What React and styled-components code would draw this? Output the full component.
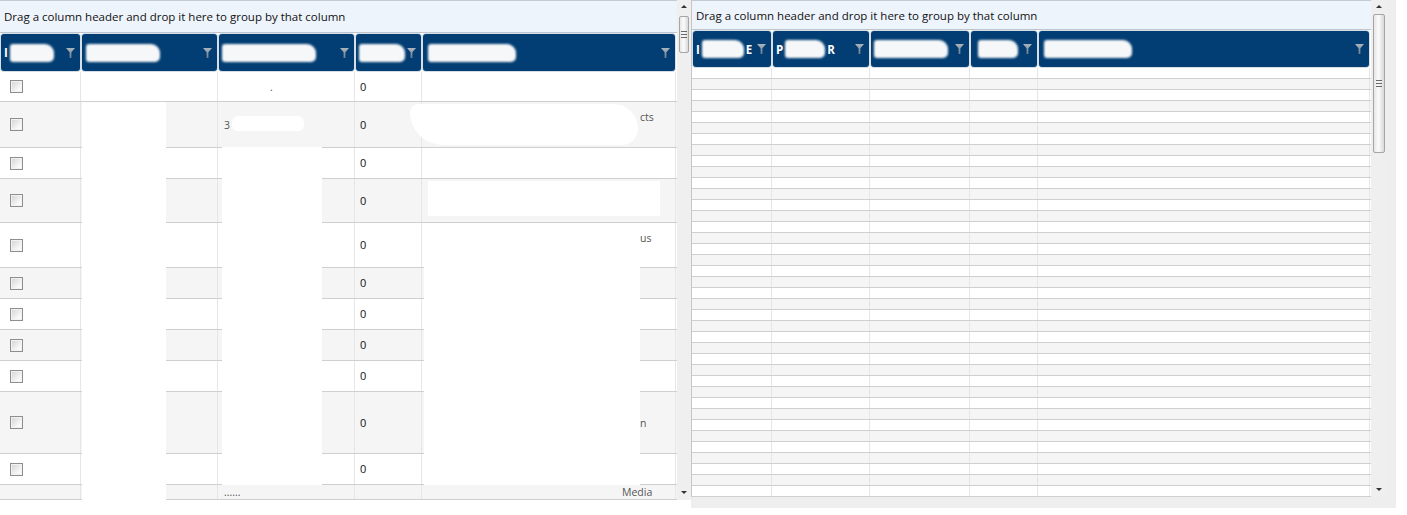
import React from 'react'
import styled, { createGlobalStyle } from 'styled-components'

const GlobalStyle = createGlobalStyle`
  html, body {
    margin: 0;
    padding: 0;
    background: #fff;
    font-family: "Open Sans", "Noto Sans", sans-serif;
    color: #111;
  }
`;

const Page = styled.div`
  display: flex;
  align-items: flex-start;
  width: 1407px;
  height: 515px;
  overflow: hidden;
`;

const LeftPane = styled.div`
  display: flex;
  height: 500px;
`;

const RightPane = styled.div`
  display: flex;
  height: 497px;
  padding: 0 9px 11px 0;
  background: #eeeeee;
`;

const Grid = styled.div`
  position: relative;
  display: flex;
  flex-direction: column;
  width: ${p => p.$w}px;
  height: 100%;
  overflow: hidden;
  background: #fff;
  border-left: ${p => (p.$edge ? '1px solid #c6c6c6' : 'none')};
`;

const GroupPanel = styled.div`
  flex: none;
  height: ${p => p.$h}px;
  box-sizing: border-box;
  display: flex;
  align-items: center;
  padding-left: 4px;
  background: #eef4fc;
  border-top: 1px solid #c3ccd6;
  border-bottom: 1px solid #bcc6d1;
  font-size: 11.5px;
  white-space: nowrap;
`;

const HeaderRow = styled.div`
  flex: none;
  display: grid;
  grid-template-columns: ${p => p.$cols};
  height: ${p => p.$h}px;
  box-sizing: border-box;
  padding: 1px 0;
  background: #fff;
`;

const HeaderCell = styled.div`
  margin: 0 1px;
  display: flex;
  align-items: center;
  justify-content: space-between;
  padding: 0 5px 0 3px;
  background: #023e73;
  border-radius: 3px;
  box-shadow: 0 0 0 1px #d7dee6;
  overflow: hidden;
  color: #fff;
  font-size: 11.5px;
  font-weight: 700;
`;

const Label = styled.div`
  display: flex;
  align-items: center;
  gap: 2px;
`;

const Blob = styled.div`
  width: ${p => p.$w}px;
  height: 18px;
  margin-left: ${p => p.$x || 0}px;
  background: #fff;
  border-radius: 3px 9px 5px 3px;
  filter: blur(0.8px);
  opacity: 0.96;
`;

const Funnel = () => (
  <svg width="9" height="10" viewBox="0 0 9 10">
    <defs>
      <linearGradient id="fg" x1="0" y1="0" x2="0" y2="1">
        <stop offset="0" stopColor="#a9b4be" />
        <stop offset="1" stopColor="#6f7e8c" />
      </linearGradient>
    </defs>
    <polygon points="0,0 9,0 5.4,4.2 5.4,10 3.6,10 3.6,4.2" fill="url(#fg)" />
  </svg>
);

const Body = styled.div`
  flex: 1;
  display: flex;
  flex-direction: column;
  overflow: hidden;
`;

const Row = styled.div`
  flex: none;
  display: grid;
  grid-template-columns: ${p => p.$cols};
  height: ${p => p.$h}px;
  box-sizing: border-box;
  background: ${p => (p.$alt ? '#f5f5f5' : '#fff')};
  border-bottom: 1px solid #cfcfcf;
`;

const Cell = styled.div`
  display: flex;
  align-items: ${p => p.$align || 'center'};
  padding-left: ${p => p.$pad || 5}px;
  padding-top: ${p => p.$top || 0}px;
  border-right: 1px solid #e6e6e6;
  font-size: 11px;
  line-height: 14px;
  overflow: hidden;
  white-space: nowrap;
`;

const Checkbox = styled.span`
  width: 11px;
  height: 11px;
  margin-left: 5px;
  border: 1px solid #8e8e8e;
  background: linear-gradient(135deg, #d2d2d2, #f7f7f7 70%, #ffffff);
  box-shadow: inset 0 0 0 1px #f2f2f2;
`;

const Faded = styled.span`
  color: #555;
  font-size: 10.5px;
`;

const Redact = styled.div`
  position: absolute;
  left: ${p => p.$x}px;
  top: ${p => p.$y}px;
  width: ${p => p.$w}px;
  height: ${p => p.$h}px;
  background: #fff;
  border-radius: ${p => p.$r || '0'};
`;

const Track = styled.div`
  display: flex;
  flex-direction: column;
  align-items: center;
  width: ${p => p.$w}px;
  height: 100%;
  background: #efefef;
`;

const Arrow = styled.div`
  flex: none;
  margin: ${p => (p.$down ? '0 0 6px' : '5px 0 0')};
  width: 0;
  height: 0;
  border-left: 3px solid transparent;
  border-right: 3px solid transparent;
  ${p => (p.$down ? 'border-top: 3px solid #333;' : 'border-bottom: 3px solid #333;')}
`;

const Thumb = styled.div`
  flex: none;
  margin-top: ${p => p.$top}px;
  width: ${p => p.$w}px;
  height: ${p => p.$h}px;
  box-sizing: border-box;
  border: 1px solid #a5a5a5;
  border-radius: 2px;
  background: linear-gradient(90deg, #e6e6e6, #fbfbfb 45%, #d9d9d9);
  display: flex;
  align-items: center;
  justify-content: center;
`;

const Grip = styled.div`
  width: 6px;
  height: 5px;
  border-top: 1px solid #666;
  border-bottom: 1px solid #666;
  position: relative;
  &::after {
    content: '';
    position: absolute;
    left: 0;
    right: 0;
    top: 2px;
    border-top: 1px solid #666;
  }
`;

const Spacer = styled.div`
  flex: 1;
`;

const ScrollBar = ({ w, top, h }) => (
  <Track $w={w}>
    <Arrow />
    <Thumb $top={top} $w={w - 4} $h={h}>
      <Grip />
    </Thumb>
    <Spacer />
    <Arrow $down />
  </Track>
);

const GROUP_TEXT = 'Drag a column header and drop it here to group by that column';

const leftCols = '81px 137px 137px 67px 254px';
const leftHeads = [
  { lead: 'I', blob: 44, x: 0 },
  { blob: 74, x: 1 },
  { blob: 94, x: 0 },
  { blob: 46, x: 0 },
  { blob: 88, x: 2 },
];

const leftRows = [
  { h: 30, c3: '.' },
  { h: 46, c3: '3', c5: 'cts', c5top: true },
  { h: 31 },
  { h: 44 },
  { h: 45, c5: 'us', c5top: true },
  { h: 31 },
  { h: 31 },
  { h: 31 },
  { h: 31 },
  { h: 62, c5: 'n' },
  { h: 31 },
  { h: 15, c3: '......', c5: 'Media', bottom: true },
];

const rightCols = '80px 98px 100px 68px 332px';
const rightHeads = [
  { lead: 'I', blob: 42, x: 0, tail: 'E' },
  { lead: 'P', blob: 40, x: 0, tail: 'R' },
  { blob: 74, x: 0 },
  { blob: 40, x: 4 },
  { blob: 88, x: 2 },
];

const redactions = [
  { x: 82, y: 102, w: 84, h: 398 },
  { x: 222, y: 147, w: 100, h: 338 },
  { x: 410, y: 104, w: 228, h: 41, r: '10px 30px 20px 40px' },
  { x: 428, y: 181, w: 232, h: 35 },
  { x: 424, y: 224, w: 216, h: 261 },
  { x: 232, y: 116, w: 72, h: 15, r: '6px' },
];

const HeaderBar = ({ cols, h, heads }) => (
  <HeaderRow $cols={cols} $h={h}>
    {heads.map((hd, i) => (
      <HeaderCell key={i}>
        <Label>
          {hd.lead}
          <Blob $w={hd.blob} $x={hd.x} />
          {hd.tail}
        </Label>
        <Funnel />
      </HeaderCell>
    ))}
  </HeaderRow>
);

const App = () => {
  return (
    <>
      <GlobalStyle />
      <Page>
        <LeftPane>
          <Grid $w={677}>
            <GroupPanel $h={33}>{GROUP_TEXT}</GroupPanel>
            <HeaderBar cols={leftCols} h={39} heads={leftHeads} />
            <Body>
              {leftRows.map((r, i) => (
                <Row key={i} $cols={leftCols} $h={r.h} $alt={i % 2 === 1}>
                  <Cell $pad={0}>
                    {!r.bottom && <Checkbox />}
                  </Cell>
                  <Cell />
                  <Cell $pad={r.c3 === '.' ? 52 : 6}>
                    {r.c3 && <Faded>{r.c3}</Faded>}
                  </Cell>
                  <Cell $pad={5}>
                    {!r.bottom && '0'}
                  </Cell>
                  <Cell
                    $pad={r.bottom ? 200 : 218}
                    $align={r.c5top ? 'flex-start' : 'center'}
                    $top={r.c5top ? 8 : 0}
                  >
                    {r.c5 && <Faded>{r.c5}</Faded>}
                  </Cell>
                </Row>
              ))}
            </Body>
            {redactions.map((d, i) => (
              <Redact key={i} $x={d.x} $y={d.y} $w={d.w} $h={d.h} $r={d.r} />
            ))}
          </Grid>
          <ScrollBar w={14} top={8} h={37} />
        </LeftPane>

        <RightPane>
          <Grid $w={679} $edge>
            <GroupPanel $h={30}>{GROUP_TEXT}</GroupPanel>
            <HeaderBar cols={rightCols} h={38} heads={rightHeads} />
            <Body>
              {Array.from({ length: 40 }).map((_, i) => (
                <Row key={i} $cols={rightCols} $h={11} $alt={i % 2 === 1}>
                  <Cell />
                  <Cell />
                  <Cell />
                  <Cell />
                  <Cell />
                </Row>
              ))}
            </Body>
          </Grid>
          <ScrollBar w={16} top={6} h={139} />
        </RightPane>
      </Page>
    </>
  )
}

export default App
